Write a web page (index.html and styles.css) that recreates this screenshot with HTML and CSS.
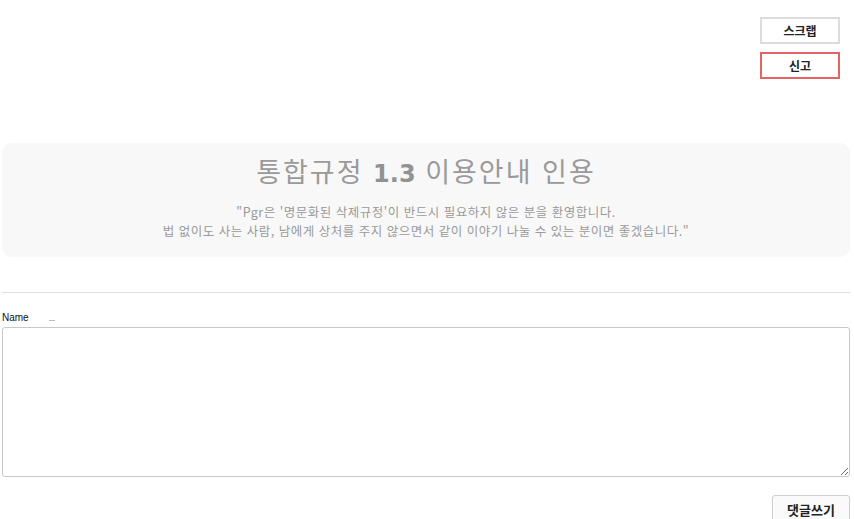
FILE: index.html
```html
<!DOCTYPE html>
<html lang="ko">
<head>
  <meta charset="UTF-8" />
  <meta name="viewport" content="width=device-width, initial-scale=1" />
  <title>통합규정 이용안내</title>
  <link rel="stylesheet" href="styles.css">
</head>
<body>
  <div class="page">
    <div class="tools">
      <button class="tool-btn">스크랩</button>
      <button class="tool-btn report">신고</button>
    </div>

    <div class="notice">
      <h2 class="notice-title">통합규정 <b>1.3</b> 이용안내 인용</h2>
      <p class="notice-text">"Pgr은 '명문화된 삭제규정'이 반드시 필요하지 않은 분을 환영합니다.<br>
      법 없이도 사는 사람, 남에게 상처를 주지 않으면서 같이 이야기 나눌 수 있는 분이면 좋겠습니다."</p>
    </div>

    <hr class="divider">

    <form class="comment-form">
      <div class="name-row">Name <span class="name-blank"></span></div>
      <textarea class="comment-box"></textarea>
      <div class="submit-row">
        <button type="button" class="submit-btn">댓글쓰기</button>
      </div>
    </form>
  </div>
</body>
</html>
```

FILE: styles.css
```css
body {
  margin: 0;
  font-family: "Noto Sans CJK KR", "DejaVu Sans", sans-serif;
  background: #fff;
  color: #333;
}
.page {
  margin: 0 4px 0 2px;
}

.tools {
  display: flex;
  flex-direction: column;
  align-items: flex-end;
  gap: 8px;
  padding: 17px 10px 0 0;
}
.tool-btn {
  width: 80px;
  height: 27px;
  background: #fff;
  border: 2px solid #dcdcdc;
  font-family: "Noto Sans CJK KR", sans-serif;
  font-size: 12px;
  font-weight: bold;
  color: #222;
  padding: 0;
  cursor: pointer;
}
.tool-btn.report {
  border-color: #e36464;
}

.notice {
  margin-top: 64px;
  background: #f8f8f8;
  border-radius: 10px;
  padding: 10px 10px 8px;
  text-align: center;
  color: #9a9a9a;
}
.notice-title {
  margin: 0;
  font-size: 27px;
  font-weight: normal;
  letter-spacing: 2px;
  line-height: 36px;
  color: #9a9a9a;
}
.notice-title b {
  font-family: "DejaVu Sans", sans-serif;
  font-size: 24px;
  letter-spacing: 0;
  color: #929292;
}
.notice-text {
  margin: 10px 0 9px;
  font-size: 12.5px;
  letter-spacing: 0.5px;
  line-height: 19px;
}

.divider {
  border: none;
  border-top: 1px solid #dedede;
  margin: 35px 0 0;
}

.name-row {
  margin-top: 19px;
  font-family: "Liberation Sans", sans-serif;
  font-size: 10px;
  color: #111;
  height: 15px;
}
.name-blank {
  display: inline-block;
  width: 6px;
  border-bottom: 1px solid #bbb;
  margin-left: 18px;
}
.comment-box {
  display: block;
  box-sizing: border-box;
  width: 100%;
  height: 150px;
  border: 1px solid #c8c8c8;
  border-radius: 3px;
  margin: 0;
  resize: vertical;
}
.submit-row {
  display: flex;
  justify-content: flex-end;
  margin-top: 18px;
}
.submit-btn {
  width: 78px;
  height: 28px;
  background: #fafafa;
  border: 1px solid #cfcfcf;
  border-radius: 3px;
  font-family: "Noto Sans CJK KR", sans-serif;
  font-size: 13px;
  font-weight: bold;
  color: #222;
  padding: 0;
}
```
